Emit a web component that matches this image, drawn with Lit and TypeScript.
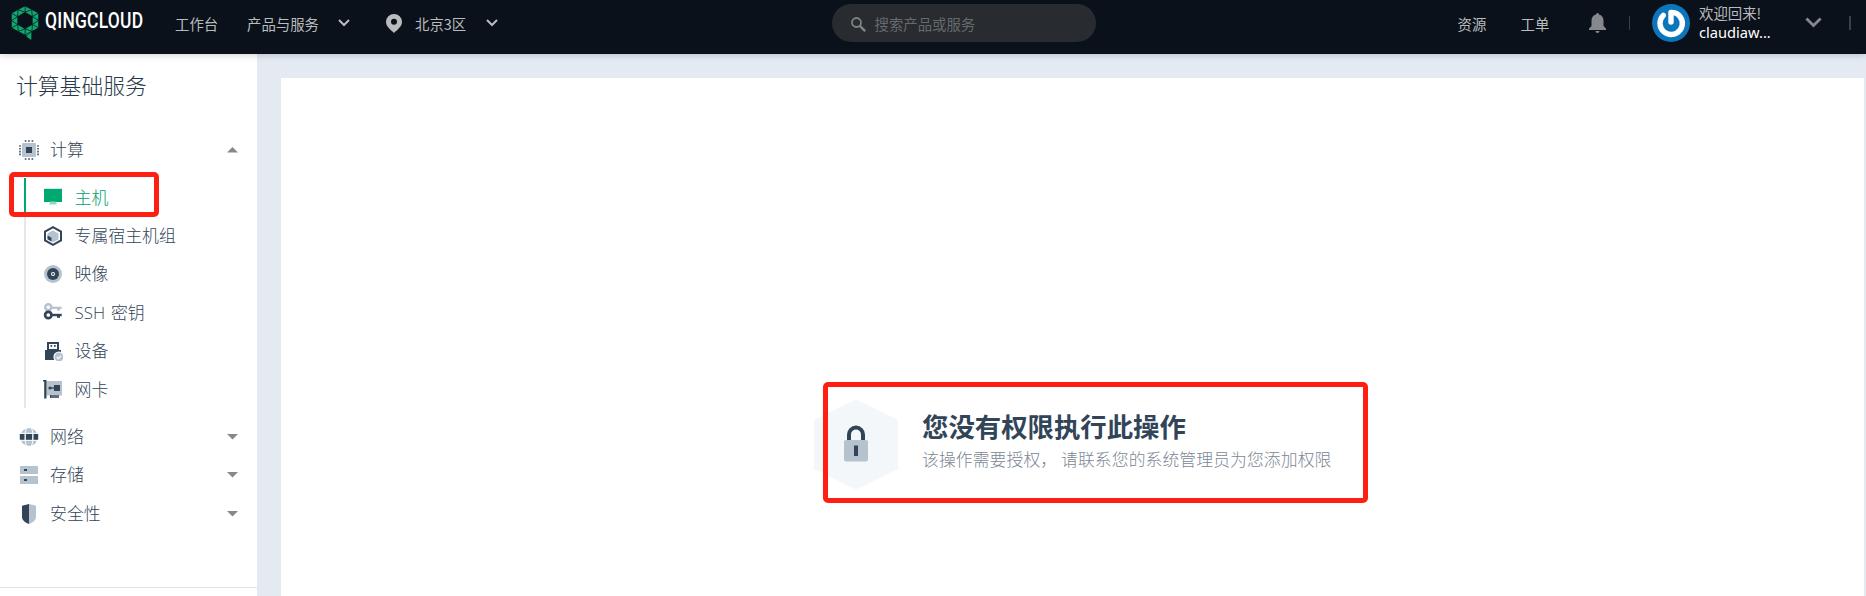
import { LitElement, html, css, svg } from "lit";
import { customElement } from "lit/decorators.js";

const D = "#324558";
const L = "#b6c2cd";

const tri = (x1: number, y1: number, x2: number, y2: number, x3: number, y3: number) =>
  svg`<path d="M${x1} ${y1}L${x2} ${y2}L${x3} ${y3}Z"/>`;

const ringPoints = () => {
  const outer = [[13, 0], [26.5, 7.2], [26.5, 21.8], [13, 29], [-0.5, 21.8], [-0.5, 7.2]];
  const inner = [[13, 6.2], [20.4, 10.5], [20.4, 18.5], [13, 22.8], [5.6, 18.5], [5.6, 10.5]];
  const out: unknown[] = [];
  for (let i = 0; i < 6; i++) {
    const a = outer[i], b = outer[(i + 1) % 6], p = inner[i], q = inner[(i + 1) % 6];
    const m = [(a[0] + b[0]) / 2, (a[1] + b[1]) / 2];
    out.push(tri(a[0], a[1], m[0], m[1], p[0], p[1]));
    out.push(tri(m[0], m[1], p[0], p[1], q[0], q[1]));
    out.push(tri(m[0], m[1], b[0], b[1], q[0], q[1]));
  }
  return out;
};

const icons: Record<string, unknown> = {
  cpu: svg`<rect x="3" y="3" width="14" height="14" rx="1" fill="${L}"/><rect x="7" y="7" width="6" height="6" fill="${D}"/>
    <path d="M5.8 1h9M5.8 19h9" stroke="${D}" stroke-width="1.5" stroke-dasharray="1.6 1.8"/>
    <path d="M1 5.2v10M19 5.2v10" stroke="${D}" stroke-width="1.5" stroke-dasharray="1.6 1.2"/>`,
  host: svg`<path d="M1 1.8h18v13.2H1z" fill="#00a971"/><path d="M7.5 14.600h5l1.500 3H6z" fill="#8fd9bf"/>`,
  group: svg`<path d="M10 1.200L18 5.600v8.800l-8 4.400-8-4.400V5.600z" fill="none" stroke="${D}" stroke-width="2"/><path d="M10 4.500l5.500 3v6L10 16.200l-5.500-3v-6z" fill="${L}"/><path d="M4.500 9.500l4 2.300v3.800l-4-2.300z" fill="${D}"/>`,
  image: svg`<circle cx="10" cy="10" r="9" fill="${L}"/><circle cx="10" cy="10" r="6" fill="${D}"/><circle cx="10" cy="10" r="2" fill="#fff"/><circle cx="10" cy="10" r="1" fill="${D}"/>`,
  key: svg`<g fill="none" stroke="${L}"><circle cx="5.300" cy="5.300" r="3" stroke-width="2.500"/><path d="M8.500 5.800H18.700" stroke-width="2.200"/><path d="M15.500 6v2.500" stroke-width="3"/></g>
    <g fill="none" stroke="${D}"><circle cx="5.300" cy="13" r="3.200" stroke-width="2.700"/><path d="M9 13h9.700" stroke-width="2.400"/><path d="M15.500 13v2.800" stroke-width="3"/></g>`,
  device: svg`<path d="M4 1h12v8h2v10H2V9h2z" fill="${D}"/><path d="M6 3h8v5H6z" fill="#fff"/><path d="M7.500 4h1.700v1.700H7.500zM11 4h1.700v1.700H11z" fill="${D}"/>
    <circle cx="16" cy="16" r="5.600" fill="#fff"/><circle cx="16" cy="16" r="4.500" fill="${L}"/><path d="M13.800 16l1.600 1.600 2.800-3" stroke="#fff" fill="none" stroke-width="1.200"/>`,
  nic: svg`<path d="M3.500 2H19v14.500H3.500z" fill="${L}"/><path d="M0 1h3.500v18.500H1.200V2.500H0z" fill="${D}"/><path d="M11 6h6v6h-6z" fill="${D}"/><path d="M6 9h5" stroke="${D}" stroke-width="1.300"/><circle cx="7" cy="9" r="1.600" fill="${D}"/><path d="M7 16h9v3H7z" fill="${D}"/><path d="M9 16v3M11 16v3M13 16v3M15 16v3" stroke="${L}" stroke-width=".7"/>`,
  net: svg`<circle cx="10" cy="10" r="9" fill="${L}"/><path d="M7.500 1C5.500 6 5.500 14 7.500 19M12.500 1c2 5 2 13 0 18M0 6.300h20M0 13.300h20" fill="none" stroke="#fff" stroke-width="1"/><path d="M.8 6.900h4.600v5.800H.8zM7 6.900h6v5.800H7zM14.600 6.900h4.600v5.800h-4.600z" fill="${D}"/>`,
  store: svg`<rect x="1" y="1" width="18" height="8" rx=".6" fill="${L}"/><rect x="1" y="11" width="18" height="8" rx=".6" fill="${L}"/><path d="M5 4h3v2H5zM5 14h3v2H5z" fill="${D}"/>`,
  shield: svg`<path d="M10 0L3 1.800V13c0 3.500 4 6.200 7 7z" fill="${D}"/><path d="M10 0l7 1.800V13c0 3.500-4 6.200-7 7z" fill="${L}"/>`,
};
const icon = (n: string) => html`<svg class="icon" viewBox="0 0 20 20">${icons[n]}</svg>`;

@customElement("top-bar")
export class TopBar extends LitElement {
  static styles = css`
    :host { display: flex; height: 54px; box-sizing: border-box; padding: 4px 0 12px; align-items: center; background: #0a111a; color: #b9bbbe; font-size: 14.4px; line-height: 20px; white-space: nowrap; position: relative; z-index: 2; box-shadow: 0 1px 7px rgba(10, 17, 26, .2); }
    svg { display: block; flex: none; }
    .logo { width: 32px; height: 38px; margin-left: 10px; }
    .brand { width: 133px; height: 38px; margin: 0 -29px 0 0; }
    .nav { margin-top: 1px; flex: none; }
    .work { margin-left: 29px; width: 72px; }
    .prod { width: 90.500px; }
    .pin { margin: 0 13px 0 36.500px; }
    .region { width: 70.500px; }
    .search { margin-left: 334px; width: 264px; height: 38px; border-radius: 19px; background: #282b2f; display: flex; align-items: center; box-sizing: border-box; padding: 2px 0 0 19px; gap: 9px; color: #66696d; flex: none; }
    .res { margin-left: 362px; width: 63px; }
    .tick { width: 68px; }
    .sep { width: 1px; height: 14px; background: #3a4048; flex: none; }
    .s1 { margin: 0 22px 0 23px; }
    .s2 { width: 2px; margin-left: 27px; }
    .who { margin-left: 9.500px; width: 105.500px; display: flex; flex-direction: column; flex: none; }
    .name { color: #fff; font-family: "Noto Sans", sans-serif; font-size: 14.650px; line-height: 19px; }
    .hi { line-height: 19px; margin-top: -1px; padding-bottom: 1px; }
  `;
  render() {
    const chev = (w: number, h: number, c: string) => html`<svg width="${w}" height="${h}" viewBox="0 0 12 8"><path d="M1 1l5 5 5-5" fill="none" stroke="${c}" stroke-width="2"/></svg>`;
    return html`
      <svg class="logo" viewBox="0 0 32 38">
        <g transform="translate(2 2)" fill="#0fa870" stroke="#0a111a" stroke-width=".5">${ringPoints()}<path d="M13 29l6.500-3.700v6.700z"/><path d="M19.500 25.500v9l-5.500-4z"/></g>
      </svg>
      <svg class="brand" viewBox="0 0 133 38"><g transform="translate(3 0) scale(.775 1)"><text x="0" y="24.500" font-family="Roboto, sans-serif" font-weight="500" font-size="22.500" fill="#fff" textLength="126.500" lengthAdjust="spacing">QINGCLOUD</text></g></svg>
      <span class="nav work">工作台</span><span class="nav prod">产品与服务</span>${chev(12, 8, "#b9bbbe")}
      <svg class="pin" width="16" height="19" viewBox="0 0 16 19"><path fill-rule="evenodd" d="M8 0a8 8 0 0 0-8 8c0 4.500 5 8 8 11 3-3 8-6.500 8-11a8 8 0 0 0-8-8zm0 4.700a3 3 0 1 1 0 6 3 3 0 0 1 0-6z" fill="#b9bbbe"/></svg>
      <span class="nav region">北京3区</span>${chev(12, 8, "#b9bbbe")}
      <div class="search"><svg width="15" height="15" viewBox="0 0 15 15"><g fill="none" stroke="#808285"><circle cx="5.500" cy="5.500" r="4.500" stroke-width="1.800"/><path d="M8.800 8.800l5.400 5.400" stroke-width="2.400"/></g></svg><span>搜索产品或服务</span></div>
      <span class="nav res">资源</span><span class="nav tick">工单</span>
      <svg width="17" height="20" viewBox="0 0 17 20"><path d="M8.500 0c1 0 1.500.8 1.500 1.500 3 .7 4.500 3 4.500 6V13l2.500 2.500V17H0v-1.500L2.500 13V7.500c0-3 1.500-5.300 4.500-6C7 .8 7.500 0 8.500 0zM6.500 18h4a2 2 0 0 1-4 0z" fill="#85888c"/></svg>
      <i class="sep s1"></i>
      <svg width="38" height="38" viewBox="0 0 38 38"><circle cx="19" cy="19" r="19" fill="#0b76bb"/><path d="M11.300 11.300A11.200 11.200 0 1 0 25 9.700Q22.500 8.300 19 8.500V18" fill="none" stroke="#fff" stroke-width="5.400" stroke-linecap="round" stroke-linejoin="round"/></svg>
      <div class="who"><span class="hi">欢迎回来!</span><span class="name">claudiaw...</span></div>
      ${chev(17, 11.5, "#85888c")}<i class="sep s2"></i>`;
  }
}

@customElement("side-menu")
export class SideMenu extends LitElement {
  static styles = css`
    :host { display: flex; flex-direction: column; width: 257px; height: 100%; background: #fff; color: #324558; font-family: "Open Sans", "Noto Sans CJK SC", sans-serif; font-size: 16.900px; font-weight: 300; white-space: nowrap; }
    .title { font-size: 21.800px; line-height: 32px; padding: 16px 0 0 16px; height: 77px; box-sizing: border-box; color: #283848; }
    .row { display: flex; align-items: center; height: 38.400px; padding: 0 19px 0 19px; line-height: 24px; }
    .icon { width: 20px; height: 20px; flex: none; }
    .label { flex: 1; margin: 0 0 0 11px; }
    .arrow { width: 11px; height: 6px; }
    .sub { margin: 8.600px 0 9.500px 24px; display: flex; flex-direction: column; }
    .item { display: flex; align-items: center; height: 38.400px; border-left: 2px solid #e3e9ef; padding-left: 17px; line-height: 24px; }
    .item .label { margin: 1px 0 0 11.500px; word-spacing: 1.500px; }
    .on { border-color: #00a971; color: #00a068; }
    .foot { margin-top: auto; height: 8px; border-top: 1px solid #e0e3e6; }
  `;
  row(i: string, t: string, open = false) {
    return html`<div class="row">${icon(i)}<span class="label">${t}</span><svg class="arrow" viewBox="0 0 11 6"><path d="${open ? "M0 5.500L5.500 0 11 5.500z" : "M0 0L5.500 5.500 11 0z"}" fill="#85888c"/></svg></div>`;
  }
  render() {
    const items = [["host", "主机"], ["group", "专属宿主机组"], ["image", "映像"], ["key", "SSH 密钥"], ["device", "设备"], ["nic", "网卡"]];
    return html`<div class="title">计算基础服务</div>${this.row("cpu", "计算", true)}
      <div class="sub">${items.map(([i, t], n) => html`<div class="item ${n === 0 ? "on" : ""}">${icon(i)}<span class="label">${t}</span></div>`)}</div>
      ${this.row("net", "网络")}${this.row("store", "存储")}${this.row("shield", "安全性")}<div class="foot"></div>`;
  }
}

@customElement("app-root")
export class AppRoot extends LitElement {
  static styles = css`
    :host { display: flex; flex-direction: column; position: relative; width: 1866px; height: 596px; overflow: hidden; background: #e3eaf2; font-family: "Noto Sans CJK SC", sans-serif; }
    .body { display: flex; flex: 1; min-height: 0; }
    .panel { flex: 1; margin: 24px 2px 0 24px; background: #fff; display: flex; box-sizing: border-box; padding: 321px 0 0 533px; gap: 24px; white-space: nowrap; }
    .lock { width: 84px; height: 91px; flex: none; }
    .h { font-size: 26.400px; line-height: 36px; font-weight: 700; color: #324558; margin-top: 9px; }
    .p { font-size: 16.800px; letter-spacing: .120px; line-height: 26px; font-weight: 300; color: #7b8794; margin-top: 2px; }
    .mark { position: absolute; box-sizing: border-box; border: 5px solid #ff1f12; border-radius: 5px; z-index: 3; }
    .m1 { left: 9px; top: 172px; width: 150px; height: 45px; }
    .m2 { left: 823px; top: 382px; width: 545px; height: 121px; }
  `;
  render() {
    return html`<top-bar></top-bar>
      <div class="body"><side-menu></side-menu>
        <div class="panel">
          <svg class="lock" viewBox="0 0 84 91"><path d="M42 .500l42 20.500v49L42 90.500 0 70V21z" fill="#f3f7fa"/><path d="M35 41v-5.500a7 7 0 0 1 14 0V41" fill="none" stroke="${D}" stroke-width="4"/><rect x="30" y="41" width="24" height="21.500" rx="2" fill="${L}"/><rect x="40" y="46.500" width="4" height="10.500" fill="${D}"/></svg>
          <div><div class="h">您没有权限执行此操作</div><div class="p">该操作需要授权， 请联系您的系统管理员为您添加权限</div></div>
        </div></div>
      <div class="mark m1"></div><div class="mark m2"></div>`;
  }
}
